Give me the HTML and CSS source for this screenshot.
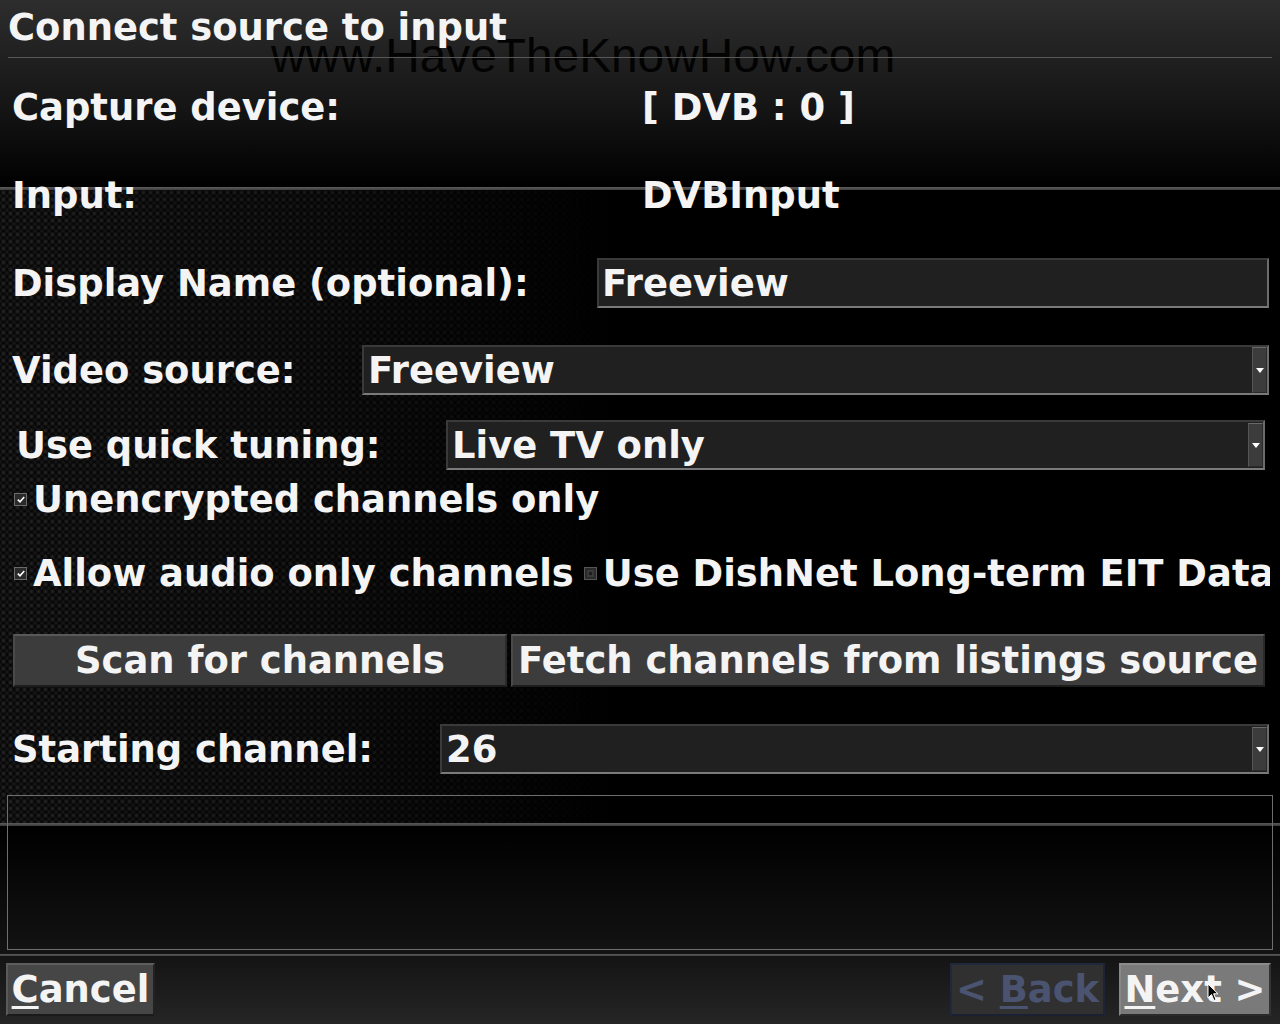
FILE: index.html
```html
<!DOCTYPE html>
<html>
<head>
<meta charset="utf-8">
<link rel="stylesheet" href="styles.css">
</head>
<body>
<div class="screen">
  <div class="watermark">www.HaveTheKnowHow.com</div>
  <div class="title">Connect source to input</div>

  <div class="row r1">
    <div class="label">Capture device:</div>
    <div class="value">[ DVB : 0 ]</div>
  </div>

  <div class="row r2">
    <div class="label">Input:</div>
    <div class="value">DVBInput</div>
  </div>

  <div class="row r3">
    <div class="label">Display Name (optional):</div>
    <div class="field name-field">Freeview</div>
  </div>

  <div class="row r4">
    <div class="label">Video source:</div>
    <div class="field select source-select">
      <span class="sel-text">Freeview</span>
      <span class="arrow"><svg width="8" height="5" viewBox="0 0 8 5"><path d="M0 0H8L4 5Z" fill="#fff"/></svg></span>
    </div>
  </div>

  <div class="row r5">
    <div class="label label-qt">Use quick tuning:</div>
    <div class="field select tuning-select">
      <span class="sel-text">Live TV only</span>
      <span class="arrow"><svg width="8" height="5" viewBox="0 0 8 5"><path d="M0 0H8L4 5Z" fill="#fff"/></svg></span>
    </div>
  </div>

  <div class="row r6">
    <span class="check on"><svg width="8" height="7" viewBox="0 0 8 7"><path d="M0.8 3.6L3 5.8L7.2 0.9" stroke="#fff" stroke-width="1.6" fill="none"/></svg></span>
    <span class="check-label">Unencrypted channels only</span>
  </div>

  <div class="row r7">
    <span class="check on"><svg width="8" height="7" viewBox="0 0 8 7"><path d="M0.8 3.6L3 5.8L7.2 0.9" stroke="#fff" stroke-width="1.6" fill="none"/></svg></span>
    <span class="check-label">Allow audio only channels</span>
    <span class="check off"></span>
    <span class="check-label">Use DishNet Long-term EIT Data</span>
  </div>

  <div class="row r8">
    <div class="btn scan-btn">Scan for channels</div>
    <div class="btn fetch-btn">Fetch channels from listings source</div>
  </div>

  <div class="row r9">
    <div class="label">Starting channel:</div>
    <div class="field select channel-select">
      <span class="sel-text">26</span>
      <span class="arrow"><svg width="8" height="5" viewBox="0 0 8 5"><path d="M0 0H8L4 5Z" fill="#fff"/></svg></span>
    </div>
  </div>

  <div class="status-box"></div>

  <div class="bottom">
    <div class="btn cancel-btn"><span><u>C</u>ancel</span></div>
    <div class="spacer"></div>
    <div class="btn back-btn"><span>&lt; <u>B</u>ack</span></div>
    <div class="btn next-btn"><span><u>N</u>ext &gt;</span>
      <svg class="cursor" width="12" height="19" viewBox="0 0 12 19"><path d="M1 1V15L4.5 11.5L7 17.5L9 16.6L6.6 10.8H11Z" fill="#000" stroke="#fff" stroke-width="1"/></svg>
    </div>
  </div>
</div>
</body>
</html>
```

FILE: styles.css
```css
html, body {
  margin: 0;
  padding: 0;
}

body {
  width: 1280px;
  height: 1024px;
  overflow: hidden;
  font-family: "DejaVu Sans", "Liberation Sans", sans-serif;
  font-weight: bold;
  font-size: 36.9px;
  color: #f4f4f4;
  background:
    linear-gradient(#5c5c5c, #3e3e3e) 0 187px / 100% 3px no-repeat,
    linear-gradient(#5a5a5a, #3a3a3a) 0 823px / 100% 3px no-repeat,
    linear-gradient(#5a5a5a, #444) 0 954px / 100% 2px no-repeat,
    linear-gradient(#2d2d2d, #161616 55%, #000) 0 0 / 100% 187px no-repeat,
    linear-gradient(#000, #131313) 0 826px / 100% 128px no-repeat,
    linear-gradient(#141414, #252525) 0 956px / 100% 68px no-repeat,
    linear-gradient(to right, rgba(0,0,0,0) 0%, rgba(0,0,0,0.3) 25%, #000 48%) 0 190px / 100% 633px no-repeat,
    radial-gradient(circle at 50% 50%, #262626 0, #1a1a1a 30%, rgba(0,0,0,0) 62%) 0 0 / 7px 7px,
    radial-gradient(circle at 50% 50%, #1e1e1e 0, #121212 30%, rgba(0,0,0,0) 62%) 3.5px 3.5px / 7px 7px,
    #050505;
}

.screen {
  position: relative;
  width: 1280px;
  height: 1024px;
  display: flex;
  flex-direction: column;
}

.watermark {
  position: absolute;
  left: 271px;
  top: 29px;
  font-family: "Liberation Sans", Arial, sans-serif;
  font-weight: normal;
  font-size: 47.8px;
  line-height: 54px;
  color: #030303;
  white-space: nowrap;
}

.title {
  position: relative;
  height: 57px;
  margin: 0 8px;
  border-bottom: 1px solid #585858;
  display: flex;
  align-items: center;
  line-height: 1;
  white-space: nowrap;
}

.row {
  display: flex;
  align-items: center;
  height: 50px;
  white-space: nowrap;
  position: relative;
}

.r1 { margin-top: 24px; }
.r2 { margin-top: 38px; }
.r3 { margin-top: 38px; }
.r4 { margin-top: 37px; }
.r5 { margin-top: 25px; }
.r6 { margin-top: 4px; }
.r7 { margin-top: 24px; width: 1270px; overflow: hidden; }
.r8 { margin-top: 36px; height: 53px; }
.r9 { margin-top: 37px; }

.label {
  padding-left: 12px;
}

.r1 .label, .r2 .label {
  width: 630px;
}

.label-qt {
  padding-left: 16px;
}

.field {
  box-sizing: border-box;
  height: 50px;
  background: #202020;
  border: 2px solid;
  border-color: #3a3a3a #6c6c6c #7a7a7a #3a3a3a;
  display: flex;
  align-items: center;
}

.r3 .label { width: 585px; }
.name-field {
  width: 672px;
  padding-left: 3px;
}

.r4 .label { width: 350px; }
.source-select { width: 907px; }

.r5 .label { width: 430px; }
.tuning-select { width: 819px; }

.r9 .label { width: 428px; }
.channel-select { width: 829px; }

.select {
  padding-left: 4px;
  justify-content: space-between;
}

.arrow {
  box-sizing: border-box;
  width: 15px;
  height: 46px;
  background: #3c3c3c;
  border: 1px solid;
  border-color: #6a6a6a #2a2a2a #2a2a2a #555;
  display: flex;
  align-items: center;
  justify-content: center;
}

.tuning-select .arrow, .channel-select .arrow { height: 44px; }

.check {
  box-sizing: border-box;
  width: 13px;
  height: 13px;
  margin-left: 14px;
  margin-right: 6px;
  border: 1px solid #6a6a6a;
  background: #2a2a2a;
  display: flex;
  align-items: center;
  justify-content: center;
  flex: none;
}

.check.off {
  margin-left: 10px;
  margin-right: 6px;
  background: #1c1c1c;
  border-color: #555;
  box-shadow: inset 0 0 0 2px #2a2a2a, inset 0 0 0 4px #3a3a3a;
}

.btn {
  box-sizing: border-box;
  display: flex;
  align-items: center;
  justify-content: center;
  border: 2px solid;
  white-space: nowrap;
}

.scan-btn {
  margin-left: 13px;
  width: 494px;
  height: 53px;
  background: #3c3c3c;
  border-color: #595959 #2a2a2a #1c1c1c #4a4a4a;
}

.fetch-btn {
  margin-left: 4px;
  width: 754px;
  height: 53px;
  background: #3c3c3c;
  border-color: #595959 #2a2a2a #1c1c1c #4a4a4a;
}

.status-box {
  box-sizing: border-box;
  margin: 21px 7px 0 7px;
  height: 155px;
  border: 1px solid #6e6e6e;
}

.bottom {
  display: flex;
  align-items: center;
  margin-top: 13px;
  height: 53px;
  padding: 0 9px 0 6px;
}

.spacer { flex: 1; }

.bottom .btn {
  height: 53px;
  position: relative;
}

.bottom u {
  text-decoration-thickness: 3px;
  text-underline-offset: 4px;
}

.cancel-btn {
  width: 149px;
  background: #464646;
  border-color: #5e5e5e #222 #1a1a1a #5a5a5a;
}

.back-btn {
  width: 155px;
  background: #303030;
  border-color: #22283c #1e2436 #1b2033 #22283c;
  color: #4a5470;
}

.next-btn {
  width: 152px;
  margin-left: 14px;
  background: #7a7a7a;
  border-color: #8c8c8c #333 #2a2a2a #888;
}

.cursor {
  position: absolute;
  left: 86px;
  top: 18px;
}
```
